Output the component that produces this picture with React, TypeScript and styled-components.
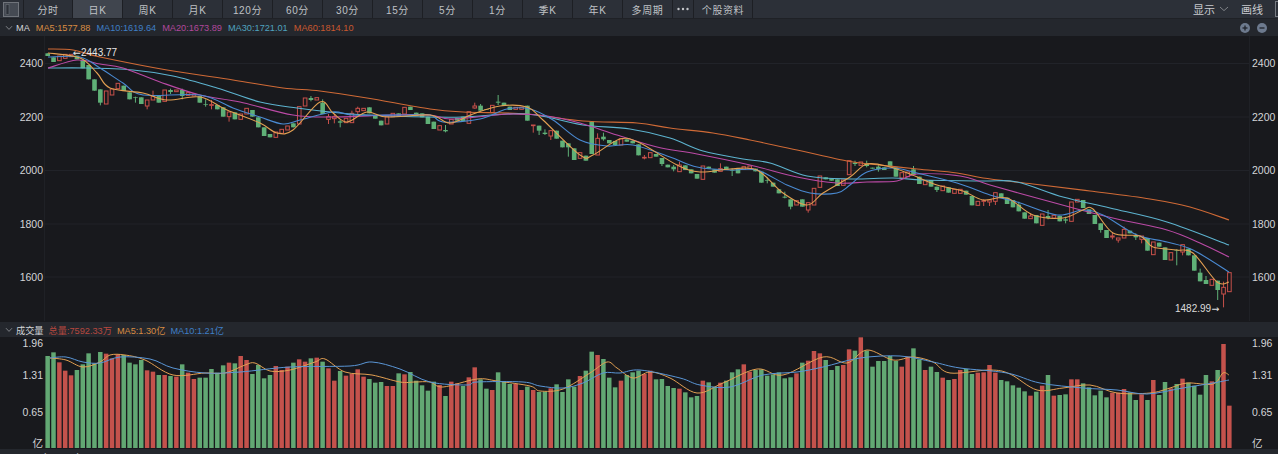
import * as React from "react";
import styled, { createGlobalStyle } from "styled-components";

const GlobalStyle = createGlobalStyle`
  html, body {
    margin: 0;
    padding: 0;
    background: #18191d;
  }
`;

const FONT = `"Liberation Sans", "Noto Sans CJK SC", sans-serif`;

const Page = styled.div`
  width: 1278px;
  height: 454px;
  overflow: hidden;
  display: flex;
  flex-direction: column;
  background: #18191d;
  font-family: ${FONT};
`;

const Toolbar = styled.div`
  height: 18px;
  flex: none;
  display: flex;
  align-items: stretch;
  justify-content: space-between;
  background: #2c3038;
  border-bottom: 1px solid #1f2126;
`;

const TabRow = styled.div`
  display: flex;
`;

const Tab = styled.div<{ $active?: boolean; $width?: number }>`
  width: ${p => p.$width ?? 50}px;
  display: flex;
  align-items: center;
  justify-content: center;
  box-sizing: border-box;
  border-right: 1px solid #1d1f24;
  background: ${p => (p.$active ? "#40454e" : "transparent")};
  color: #bfc1c5;
  font-size: 10px;
  letter-spacing: 0.6px;
`;

const PanelToggle = styled(Tab)`
  padding-right: 1px;
`;

const ToolGroup = styled.div`
  display: flex;
  align-items: center;
  color: #c9cbcf;
  font-size: 11px;
`;

const ToolLabel = styled.span`
  display: flex;
  align-items: center;
  gap: 4px;
  margin-right: 12px;
`;

const CutOffButton = styled.div`
  width: 2px;
  height: 14px;
  border: 1px solid #777b82;
  border-right: 0;
`;

const LegendBar = styled.div`
  height: 17px;
  flex: none;
  display: flex;
  align-items: center;
  gap: 6px;
  padding: 0 5px;
  background: #24272d;
  font-size: 9.2px;
  white-space: nowrap;
`;

const VolumeLegend = styled(LegendBar)`
  height: 15px;
  margin-top: 1px;
  gap: 5px;
`;

const BottomLegend = styled(LegendBar)`
  align-items: flex-start;
  padding-top: 3px;
  box-sizing: border-box;
  height: 20px;
`;

const LegendTitle = styled.span`
  display: flex;
  align-items: center;
  gap: 3px;
  color: #d3d5d8;
`;

const LegendValue = styled.span<{ $color: string }>`
  color: ${p => p.$color};
`;

const ZoomControls = styled.div`
  margin-left: auto;
  display: flex;
  gap: 7px;
  padding-right: 6px;
`;

const Pane = styled.svg`
  display: block;
  flex: none;
  width: 1278px;
  font-family: ${FONT};
`;

const UP = "#c7504a";
const DOWN = "#5fb077";
const AXIS = "#d4d5d8";
const BG = "#18191d";
const ARROW_FONT = `"DejaVu Sans", sans-serif`;

const TABS = ["120分", "60分", "30分", "15分", "5分", "1分", "季K", "年K", "多周期"];

// y values read off the chart, [top-bottom] of body and optional :wick range
const CANDLES_A =
  "g160-168 g172-186 r168-182 r163-175 r163-170 g167-178 g180-205 g195-238 g238-272 g268-308:268-316 r273-312 r267-285 r250-266 g257-273 g277-298 g292-294:290-308 g292-312 r300-318:300-328 r288-300:272-300 g285-308 r270-304 g270-276:266-282 r270-275 g270-288:266-298 r278-286 r282-288 g288-308 g312-314:298-320 r314-316:300-328 g315-328 g322-350 r336-350:336-365 g337-358 r342-358 r325-342 g330-350 g352-382 g382-408 g402-412 r396-412 r388-400 r378-390 g370-382 r320-372 r294-318 g294-300:288-304 r293-300 g308-342:298-342 r350-358:342-372 r350-356:342-370 g364-368:360-382 r355-368 r340-368:332-368 r325-335:320-345 r325-332 g322-340 g345-356 g362-376 r350-372 r340-350 g340-350 r322-342 g320-330 g338-348 g340-352 g350-372";
const CANDLES_B =
  "g95-117 r107-120 g120-124:105-127 r88-102 g84-92 g80-93 r65-100 r48-54:38-56 g47-62:42-62 g58-60 r46-68 g35-38:15-45 g38-48 g50-60 r52-58 r52-58 g47-92 r105-107:105-128 g107-122:107-135 g128-132:118-135 r122-138:120-150 g122-146 g152-172 g160-172:160-200 g175-210 r188-205 g197-212 g95-192 r145-195:130-195 g140-148:128-152 g150-160 g153-165 r146-165 g148-155 g152-160 g163-196 r202-204:195-208 r188-203 g192-200 g204-222:204-228 g224-232 g230-238:225-244 r225-245:215-245 g226-240 g238-250 g252-266 r228-268 g230-236 g238-248 r236-244:220-244 g230-240 g240-242:235-258 g235-250 r230-238 r228-236 g236-244 g245-278 g270-272:262-280 g278-290 g298-310 g320-323:305-325 g328-350:328-358 r332-345 g328-350 r338-360:338-368 r295-345 r258-292 g262-268 g265-272 g268-288 r270-286 r212-254";
const CANDLES_C =
  "g38-42:32-48 r36-46 g40-48:32-52 g53-56 g50-58:45-65 g52-60 g34-50 g52-80 r68-84 r66-80 g58-74:48-74 g80-102 r92-104 g90-110 g110-120:110-126 r108-122 g112-128 r118-130 r118-130 g122-134 g138-166 r154-166 r152-154:148-168 r150-156:150-168 r128-154:128-165 g130-142 g143-162 g150-172 g164-184:155-184 g187-206 r198-206:190-206 g195-220 r192-226 g198-204:180-208 r196-204 g198-214 g208-212:200-220 r156-214 r148-156 g150-174 g178-192 g195-222 g220-240:220-248 g240-264 r258-261:248-268 r264-270:264-278 r238-264:230-264 g242-250 g256-262:250-270 r258-268:258-280 g264-302 r276-314 g278-290 g292-330 r308-330 g300-302:298-346 r284-306:284-316 g296-316 g316-362 g368-394:356-394 g390-402:378-402 r388-406 g392-420:392-450 r412-432:395-472 r368-425";

const VOLUMES_A =
  "138g 127g 157r 182r 196r 180g 163g 130g 160g 126g 131r 145r 133r 135g 158g 163g 150g 181r 185r 195g 195r 198g 200r 163g 188r 207r 203g 203g 177g 188g 166g 158r 160g 138r 150r 192g 165g 205g 195g 168r 180r 170r 158g 148r 155r 145g 143r 155g 175r 212r 183g 197r 192r 178r 200r 207g 218g 216g 228r 228r 190g 193r 186g 212g 226g 242g";
const VOLUMES_B =
  "155g 165r 198g 155r 160r 168g 142r 112r 148g 176g 180r 127g 155g 162g 162r 180r 170g 180r 186g 185g 175r 163g 186g 148g 170g 138r 122g 65g 75r 87g 143g 172g 152r 135g 127g 122g 132r 122r 148g 147g 168g 174g 176r 187g 202g 198g 152r 157g 170g 158r 152g 127g 118g 103r 125r 120g 118g 137g 133g 127g 145g 142g 130r 98g 92r 63r 70r 90g 120g 108g 105r 58r";
const VOLUMES_C =
  "392g 352r 392g 440g 423g 423g 408g 423g 440r 410r 385g 418g 450r 440g 456g 473r 480g 477r 450r 447g 462g 458r 457r 435r 458r 480g 484g 496g 503g 514g 527r 515g 497r 465g 527r 525g 523g 478r 478r 490g 502g 526g 512g 532g 518r 518r 507r 517g 540g 523r 540g 480r 525g 486g 505r 492g 476r 488g 497g 524g 465g 484r 450g 372r 557r";

type Candle = { up: boolean; top: number; bottom: number; high: number; low: number };
type Bar = { up: boolean; top: number };

const parseCandles = (src: string, offset: number): Candle[] =>
  src.split(" ").map(tok => {
    const m = tok.match(/^([rg])(\d+)-(\d+)(?::(\d+)-(\d+))?$/)!;
    const y = (v: string) => offset + Number(v) / 3;
    return {
      up: m[1] === "r",
      top: y(m[2]),
      bottom: y(m[3]),
      high: m[4] ? y(m[4]) : y(m[2]),
      low: m[5] ? y(m[5]) : y(m[3]),
    };
  });

const parseBars = (src: string, offset: number): Bar[] =>
  src.split(" ").map(tok => ({
    up: tok.endsWith("r"),
    top: offset + parseInt(tok, 10) / 3,
  }));

const candles = [
  ...parseCandles(CANDLES_A, 0),
  ...parseCandles(CANDLES_B, 90),
  ...parseCandles(CANDLES_C, 150),
];
const bars = [...parseBars(VOLUMES_A, 310), ...parseBars(VOLUMES_B, 330), ...parseBars(VOLUMES_C, 220)];

const slotX = (i: number) => 47.7 + i * 5.85;

type Pt = [number, number];

const MA60: Pt[] = [[48,49],[73,50],[100,57],[167,70],[233,80],[283,88],[320,91],[367,98],[430,109],[463,112],[527,114],[583,121],[637,123],[670,128],[713,133],[750,140],[797,150],[847,161],[870,164],[917,169],[957,173],[983,178],[1033,184],[1090,191],[1150,199],[1190,207],[1229,220]];
const MA30: Pt[] = [[48,68],[87,68],[133,70],[173,76],[217,88],[260,102],[297,108],[340,113],[367,115],[430,117],[463,117],[507,114],[527,114],[547,117],[583,125],[630,129],[670,138],[703,151],[743,159],[770,163],[807,176],[850,179],[893,178],[923,180],[983,181],[1017,182],[1063,197],[1110,208],[1167,222],[1229,245]];
const MA20: Pt[] = [[48,68],[77,60],[100,64],[123,68],[160,82],[200,95],[240,102],[293,115],[333,117],[393,115],[430,115],[450,119],[487,116],[513,114],[547,116],[580,123],[617,135],[657,147],[697,154],[750,165],[797,177],[837,183],[867,182],[897,181],[917,174],[960,176],[990,185],[1033,197],[1077,209],[1117,219],[1167,230],[1200,243],[1229,257]];
const MA10: Pt[] = [[48,57],[80,57],[100,68],[123,83],[143,95],[200,95],[233,108],[260,117],[283,124],[300,120],[333,112],[353,115],[400,115],[430,115],[443,122],[480,119],[507,109],[530,109],[553,120],[580,140],[607,146],[633,145],[670,157],[697,167],[730,170],[757,170],[787,185],[810,193],[837,193],[850,185],[867,172],[893,168],[917,173],[957,183],[990,195],[1017,202],[1057,215],[1083,210],[1103,215],[1137,235],[1167,242],[1193,250],[1229,272]];
const MA5: Pt[] = [[48,53],[80,58],[97,73],[110,88],[143,93],[167,100],[200,97],[227,110],[260,123],[277,133],[293,130],[320,102],[333,113],[347,122],[367,112],[387,117],[430,115],[450,123],[473,114],[500,106],[527,107],[543,120],[580,155],[593,155],[620,139],[640,143],[677,165],[700,172],[730,169],[757,170],[783,193],[807,205],[823,193],[850,177],[867,164],[890,167],[910,174],[937,185],[963,191],[983,200],[1007,198],[1033,215],[1063,218],[1083,210],[1093,209],[1113,233],[1140,236],[1153,247],[1177,250],[1193,253],[1217,282],[1229,282]];

const VOL_MA5: Pt[] = [[50,358],[66,360],[83,367],[100,362],[110,355],[125,355],[145,360],[173,375],[205,373],[225,373],[245,365],[255,363],[270,371],[290,370],[315,362],[325,359],[345,372],[372,375],[400,382],[415,382],[430,382],[443,387],[477,379],[497,381],[530,386],[540,391],[563,389],[590,373],[607,362],[617,368],[633,378],[650,372],[670,378],[697,393],[723,383],[757,369],[783,375],[823,357],[847,363],[867,350],[893,360],[913,357],[933,362],[950,373],[990,370],[1010,374],[1037,390],[1063,388],[1090,385],[1117,393],[1150,393],[1170,388],[1187,383],[1213,384],[1223,373],[1229,375]];
const VOL_MA10: Pt[] = [[50,358],[66,357],[83,362],[100,363],[120,357],[150,359],[173,368],[205,373],[240,372],[290,367],[350,366],[372,362],[400,369],[430,382],[467,385],[477,382],[523,382],[540,386],[563,388],[583,383],[603,373],[620,373],[640,370],[680,378],[700,385],[730,387],[763,375],[797,372],[823,367],[860,358],[900,356],[933,362],[960,368],[1007,373],[1040,383],[1083,388],[1117,390],[1147,394],[1183,388],[1213,383],[1229,380]];

// catmull-rom through the read-off points so the averages stay smooth
const smooth = (pts: Pt[]) => {
  let d = `M${pts[0][0]} ${pts[0][1]}`;
  for (let i = 0; i < pts.length - 1; i++) {
    const p0 = pts[Math.max(i - 1, 0)];
    const p1 = pts[i];
    const p2 = pts[i + 1];
    const p3 = pts[Math.min(i + 2, pts.length - 1)];
    const c1x = p1[0] + (p2[0] - p0[0]) / 6;
    const c1y = p1[1] + (p2[1] - p0[1]) / 6;
    const c2x = p2[0] - (p3[0] - p1[0]) / 6;
    const c2y = p2[1] - (p3[1] - p1[1]) / 6;
    d += `C${c1x.toFixed(1)} ${c1y.toFixed(1)} ${c2x.toFixed(1)} ${c2y.toFixed(1)} ${p2[0]} ${p2[1]}`;
  }
  return d;
};

const Chevron = ({ wide }: { wide?: boolean }) => (
  <svg width={wide ? 10 : 8} height="6" viewBox={wide ? "0 0 10 6" : "0 0 8 6"}>
    <path
      d={wide ? "M1 1 5 4.6 9 1" : "M1 1.2 4 4.4 7 1.2"}
      fill="none"
      stroke="#7f8287"
      strokeWidth="1"
    />
  </svg>
);

const PanelIcon = () => (
  <svg width="16" height="15" viewBox="0 0 16 15">
    <rect x="0.5" y="0.5" width="15" height="14" fill="#454a53" stroke="#70747b" />
    <rect x="3" y="2.5" width="3" height="10" fill="#2c3038" stroke="#6a6e75" strokeWidth="0.6" />
  </svg>
);

const MoreIcon = () => (
  <svg width="12" height="4" viewBox="0 0 12 4">
    <circle cx="1.5" cy="2" r="1.2" fill="#c4c6ca" />
    <circle cx="6" cy="2" r="1.2" fill="#c4c6ca" />
    <circle cx="10.5" cy="2" r="1.2" fill="#c4c6ca" />
  </svg>
);

const ZoomIcon = ({ plus }: { plus?: boolean }) => (
  <svg width="10" height="10" viewBox="0 0 10 10">
    <circle cx="5" cy="5" r="5" fill="#6d7a8e" />
    <path d="M2.5 5h5" stroke="#20232a" strokeWidth="1.3" />
    {plus && <path d="M5 2.5v5" stroke="#20232a" strokeWidth="1.3" />}
  </svg>
);

const AxisLabel = ({ y, children }: { y: number; children: React.ReactNode }) => (
  <>
    <text x={43} y={y} textAnchor="end" fontSize="10.5" fill={AXIS}>
      {children}
    </text>
    <text x={1252} y={y} fontSize="10.5" fill={AXIS}>
      {children}
    </text>
  </>
);

const PricePane = () => (
  <Pane height="285" viewBox="0 36 1278 285">
    {[63.5, 117, 170.5, 224, 277].map(y => (
      <line key={y} x1="44" x2="1249" y1={y} y2={y} stroke="#212329" />
    ))}
    <line x1="44.5" x2="44.5" y1="36" y2="321" stroke="#1f2126" />
    <line x1="1249.5" x2="1249.5" y1="36" y2="321" stroke="#1f2126" />
    <AxisLabel y={67}>2400</AxisLabel>
    <AxisLabel y={120.5}>2200</AxisLabel>
    <AxisLabel y={174}>2000</AxisLabel>
    <AxisLabel y={227.5}>1800</AxisLabel>
    <AxisLabel y={281}>1600</AxisLabel>
    {candles.map((c, i) => {
      const x = slotX(i);
      const color = c.up ? UP : DOWN;
      return (
        <g key={i}>
          <line x1={x} x2={x} y1={c.high} y2={c.low} stroke={color} />
          {c.up ? (
            <rect x={x - 1.8} y={c.top} width="3.6" height={c.bottom - c.top} fill={BG} stroke={color} />
          ) : (
            <rect x={x - 2.3} y={c.top} width="4.6" height={c.bottom - c.top} fill={color} />
          )}
        </g>
      );
    })}
    <path d={smooth(MA60)} fill="none" stroke="#cf6a36" strokeWidth="1.1" />
    <path d={smooth(MA30)} fill="none" stroke="#5db3cf" strokeWidth="1.1" />
    <path d={smooth(MA20)} fill="none" stroke="#bb4aa6" strokeWidth="1.1" />
    <path d={smooth(MA10)} fill="none" stroke="#4a8ad2" strokeWidth="1.1" />
    <path d={smooth(MA5)} fill="none" stroke="#e3a052" strokeWidth="1.1" />
    <text x={73} y={55.5} fontSize="10" fill="#e6e6e6">
      <tspan fontFamily={ARROW_FONT} fontSize="9.5">←</tspan>
      2443.77
    </text>
    <text x={1175} y={312} fontSize="10" fill="#dcdcdc">
      1482.99
      <tspan fontFamily={ARROW_FONT} fontSize="9.5">→</tspan>
    </text>
  </Pane>
);

const VolumePane = () => (
  <Pane height="112" viewBox="0 337 1278 112">
    <AxisLabel y={346.5}>1.96</AxisLabel>
    <AxisLabel y={379}>1.31</AxisLabel>
    <AxisLabel y={415.5}>0.65</AxisLabel>
    <AxisLabel y={447}>亿</AxisLabel>
    {bars.map((b, i) => (
      <rect
        key={i}
        x={slotX(i) - 2.3}
        y={b.top}
        width="4.5"
        height={448 - b.top}
        fill={b.up ? "#c4524c" : "#62a873"}
      />
    ))}
    <path d={smooth(VOL_MA5)} fill="none" stroke="#e3a052" />
    <path d={smooth(VOL_MA10)} fill="none" stroke="#5a96d6" />
  </Pane>
);

export default function App() {
  return (
    <Page>
      <GlobalStyle />
      <Toolbar>
        <TabRow>
          <PanelToggle $width={24}>
            <PanelIcon />
          </PanelToggle>
          <Tab $width={49}>分时</Tab>
          <Tab $active>日K</Tab>
          <Tab>周K</Tab>
          <Tab>月K</Tab>
          {TABS.map(t => (
            <Tab key={t}>{t}</Tab>
          ))}
          <Tab $width={21}>
            <MoreIcon />
          </Tab>
          <Tab $width={59}>个股资料</Tab>
        </TabRow>
        <ToolGroup>
          <ToolLabel>
            显示 <Chevron wide />
          </ToolLabel>
          <ToolLabel>画线</ToolLabel>
          <CutOffButton />
        </ToolGroup>
      </Toolbar>
      <LegendBar>
        <LegendTitle>
          <Chevron />
          MA
        </LegendTitle>
        <LegendValue $color="#d98c42">MA5:1577.88</LegendValue>
        <LegendValue $color="#3f7fc6">MA10:1619.64</LegendValue>
        <LegendValue $color="#b1489c">MA20:1673.89</LegendValue>
        <LegendValue $color="#4fa2bf">MA30:1721.01</LegendValue>
        <LegendValue $color="#c9582f">MA60:1814.10</LegendValue>
        <ZoomControls>
          <ZoomIcon plus />
          <ZoomIcon />
        </ZoomControls>
      </LegendBar>
      <PricePane />
      <VolumeLegend>
        <LegendTitle>
          <Chevron />
          成交量
        </LegendTitle>
        <LegendValue $color="#b8473f">总量:7592.33万</LegendValue>
        <LegendValue $color="#d98c42">MA5:1.30亿</LegendValue>
        <LegendValue $color="#3f7fc6">MA10:1.21亿</LegendValue>
      </VolumeLegend>
      <VolumePane />
      <BottomLegend>
        <LegendTitle>
          <Chevron />
          MACD(12,26,9)
        </LegendTitle>
      </BottomLegend>
    </Page>
  );
}
